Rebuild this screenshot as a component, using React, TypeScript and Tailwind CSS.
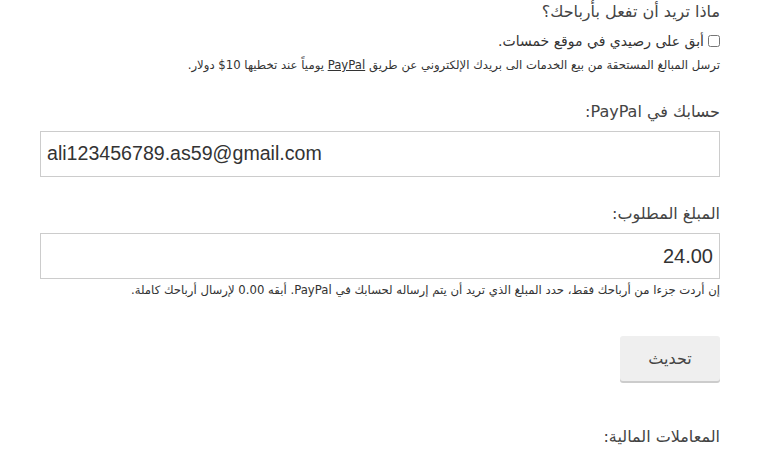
export default function App() {
  return (
    <div
      dir="rtl"
      className="h-[464px] w-[760px] overflow-hidden bg-white pl-[40px] pr-[40px] text-[#444]"
      style={{ fontFamily: '"DejaVu Sans", "Liberation Sans", sans-serif' }}
    >
      <h3 className="pt-0 text-[16px] leading-[24px] text-[#444]">ماذا تريد أن تفعل بأرباحك؟</h3>
      <label className="mt-[8px] flex items-center gap-[4px] text-[14px] leading-[18px] text-[#333]">
        <input type="checkbox" className="m-0 h-[12px] w-[12px]" />
        <span>أبق على رصيدي في موقع خمسات.</span>
      </label>
      <p className="mt-[7px] text-[11.7px] leading-[16px] text-[#333]">
        ترسل المبالغ المستحقة من بيع الخدمات الى بريدك الإلكتروني عن طريق{" "}
        <span className="underline">PayPal</span> يومياً عند تخطيها <bdi dir="ltr">$10</bdi> دولار.
      </p>

      <p className="mt-[28px] text-[16px] leading-[22px] text-[#444]">حسابك في PayPal:</p>
      <div
        dir="ltr"
        className="mt-[8px] flex h-[46px] items-center border border-[#ccc] px-[6px] text-[19.6px] text-[#333]"
        style={{ fontFamily: '"Liberation Sans", Arial, sans-serif' }}
      >
        ali123456789.as59@gmail.com
      </div>

      <p className="mt-[26px] text-[16px] leading-[22px] text-[#444]">المبلغ المطلوب:</p>
      <div
        className="mt-[8px] flex h-[46px] items-center border border-[#ccc] px-[6px] text-[20px] text-[#333]"
        style={{ fontFamily: '"Liberation Sans", Arial, sans-serif' }}
      >
        24.00
      </div>
      <p className="mt-[3px] text-[11.7px] leading-[16px] text-[#333]">
        إن أردت جزءا من أرباحك فقط، حدد المبلغ الذي تريد أن يتم إرساله لحسابك في PayPal. أبقه 0.00 لإرسال أرباحك كاملة.
      </p>

      <button className="mt-[38px] h-[45px] w-[100px] rounded-[3px] bg-[#efefef] text-[16px] text-[#444] shadow-[0_2px_0_#ccc]">
        تحديث
      </button>

      <p className="mt-[45px] text-[16px] leading-[22px] text-[#444]">المعاملات المالية:</p>
    </div>
  );
}
